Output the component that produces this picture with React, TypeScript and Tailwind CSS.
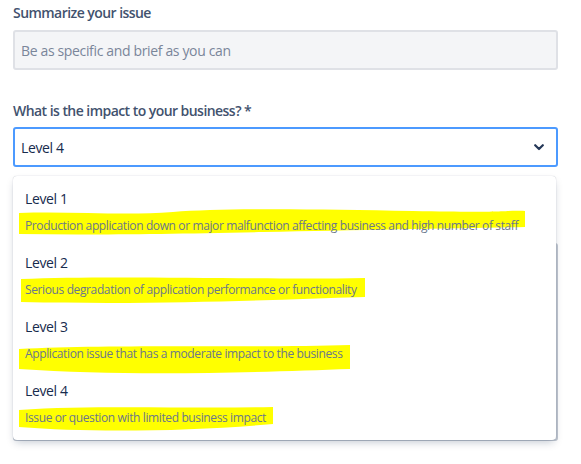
import { useState } from "react";

const levels = [
  { label: "Level 1", desc: "Production application down or major malfunction affecting business and high number of staff" },
  { label: "Level 2", desc: "Serious degradation of application performance or functionality" },
  { label: "Level 3", desc: "Application issue that has a moderate impact to the business" },
  { label: "Level 4", desc: "Issue or question with limited business impact" },
];

// highlighter marks drawn over the screenshot (coords relative to the menu)
const marks = [
  "M6 37 C 60 35, 110 40, 160 36 S 300 33, 400 35 S 490 34, 512 35 L 512 51 C 450 52, 350 54, 250 56 S 80 59, 6 58 Z",
  "M8 103 C 100 99, 250 104, 352 102 L 352 121 C 250 124, 150 129, 8 126 Z",
  "M6 173 C 100 168, 250 172, 337 169 L 337 193 C 250 196, 120 201, 6 193 Z",
  "M6 234 C 80 229, 180 233, 260 231 L 260 248 C 180 255, 80 257, 6 251 Z",
];

export default function App() {
  const [value] = useState("Level 4");

  return (
    <div className="min-h-[464px] w-[581px] bg-white pt-[3px] pr-[23px] pl-[13px] font-['Open_Sans',sans-serif]">
      <label className="block text-[14px] leading-5 font-semibold tracking-[-0.55px] text-[#42526e]">Summarize your issue</label>
      <div className="mt-[7px] flex h-10 items-center rounded-[3px] border-2 border-[#dfe1e6] bg-[#f4f5f7] px-[6px] text-[14px] tracking-[-0.35px] text-[#7a869a]">
        Be as specific and brief as you can
      </div>

      <label className="mt-[31px] block text-[14px] leading-5 font-semibold tracking-[-0.55px] text-[#42526e]">
        What is the impact to your business?<span className="ml-[3px] text-[#42526e]">*</span>
      </label>

      <div className="relative mt-[6px]">
        <div className="flex h-10 items-center justify-between rounded-[3px] border-2 border-[#4c9aff] bg-white pr-[12px] pl-[6px] text-[14px] tracking-[-0.35px] text-[#172b4d]">
          <span>{value}</span>
          <svg width="10" height="7" viewBox="0 0 10 7" className="text-[#253858]">
            <path d="M1.2 1.2 L5 5 L8.8 1.2" fill="none" stroke="currentColor" strokeWidth="2.2" strokeLinecap="round" strokeLinejoin="round" />
          </svg>
        </div>

        <div className="relative mt-[76px] h-[198px] rounded-[3px] border-2 border-[#c1c7d0] bg-white">
          <svg width="7" height="6" viewBox="0 0 7 6" className="absolute right-[1px] bottom-[1px] text-[#6b778c]">
            <path d="M6 1 L1 6 M6 4 L3 6" stroke="currentColor" strokeWidth="1" />
          </svg>
        </div>

        <div className="absolute top-[49px] left-0 z-10 w-[543px] rounded-[4px] bg-white py-1 shadow-[0_4px_8px_-2px_rgba(9,30,66,0.25),0_0_1px_rgba(9,30,66,0.31)]">
          <svg className="absolute inset-0 z-0" width="543" height="264" viewBox="0 0 543 264">
            {marks.map((d, i) => (
              <path key={i} d={d} fill="#ffff00" />
            ))}
          </svg>
          {levels.map((l) => (
            <div key={l.label} className="relative z-10 h-16 px-3 pt-[9px]">
              <div className="text-[14px] leading-5 tracking-[-0.35px] text-[#172b4d]">{l.label}</div>
              <div className="mt-[9px] text-[12px] leading-4 whitespace-nowrap tracking-[-0.38px] text-[#6b778c]">{l.desc}</div>
            </div>
          ))}
        </div>
      </div>
    </div>
  );
}
